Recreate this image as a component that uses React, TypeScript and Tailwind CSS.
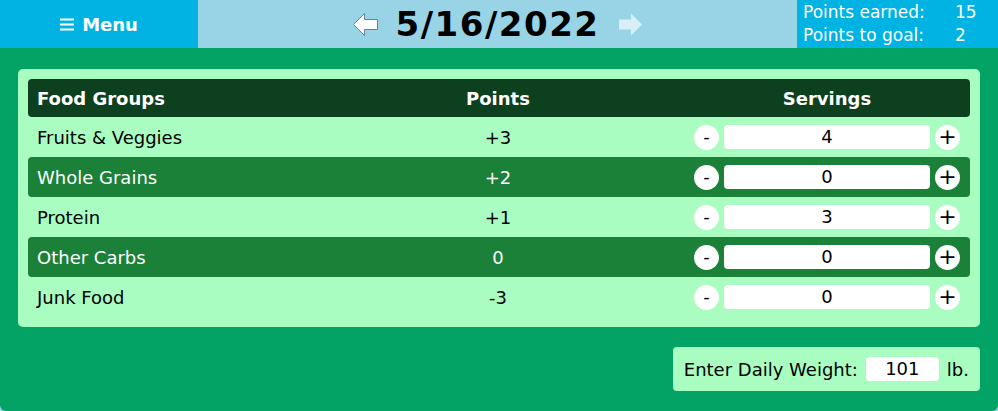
const rows = [
  { name: "Fruits & Veggies", points: "+3", servings: 4 },
  { name: "Whole Grains", points: "+2", servings: 0 },
  { name: "Protein", points: "+1", servings: 3 },
  { name: "Other Carbs", points: "0", servings: 0 },
  { name: "Junk Food", points: "-3", servings: 0 },
]

function ArrowLeft() {
  return (
    <svg width="27" height="25" viewBox="0 0 27 25">
      <path d="M1.5 12.5 L12.5 1.5 L12.5 7.5 L25.5 7.5 L25.5 17.5 L12.5 17.5 L12.5 23.5 Z" fill="#ffffff" stroke="#6b7f95" strokeWidth="1" />
    </svg>
  )
}

function ArrowRight() {
  return (
    <svg width="25" height="25" viewBox="0 0 25 25">
      <path d="M24 12.5 L13 1.5 L13 7.5 L1 7.5 L1 17.5 L13 17.5 L13 23.5 Z" fill="#d8eff6" />
    </svg>
  )
}

function MenuIcon() {
  return (
    <svg width="14" height="13" viewBox="0 0 14 13">
      <rect x="0" y="0.5" width="14" height="2" fill="#ffffff" />
      <rect x="0" y="5.5" width="14" height="2" fill="#ffffff" />
      <rect x="0" y="10.5" width="14" height="2" fill="#ffffff" />
    </svg>
  )
}

export default function App() {
  return (
    <div className="w-[998px] h-[411px] flex flex-col bg-[#99d4e6] text-black" style={{ fontFamily: '"DejaVu Sans", Verdana, sans-serif' }}>
      {/* Header */}
      <header className="h-12 flex">
        <div className="w-[198px] bg-[#00b3e3] flex items-center justify-center text-white font-bold text-[18px] gap-[8px]">
          <MenuIcon />
          <span>Menu</span>
        </div>
        <div className="flex-1 bg-[#99d4e6] flex items-center justify-center">
          <ArrowLeft />
          <span className="font-bold text-[34px] tracking-[1.5px] leading-none ml-[17px] mr-[19px]">5/16/2022</span>
          <ArrowRight />
        </div>
        <div className="w-[201px] bg-[#00b3e3] text-white text-[17px] pl-[6px] pt-[1px] leading-[23px]">
          <div className="flex"><span className="w-[152px]">Points earned:</span><span>15</span></div>
          <div className="flex"><span className="w-[152px]">Points to goal:</span><span>2</span></div>
        </div>
      </header>

      {/* Main */}
      <main className="flex-1 bg-[#02a364] rounded-b-md px-[18px] pt-[21px] flex flex-col">
        <div className="bg-[#a9fdc0] rounded-[5px] p-[10px]">
          <div className="h-[38px] bg-[#0c401e] rounded-[4px] flex items-center text-white font-bold text-[18px] pl-[9px] pr-[10px]">
            <div className="w-[381px]">Food Groups</div>
            <div className="w-[160px] text-center">Points</div>
            <div className="ml-auto w-[266px] text-center">Servings</div>
          </div>
          {rows.map((r, i) => {
            const dark = i % 2 === 1
            return (
              <div
                key={r.name}
                className={`h-10 flex items-center text-[18px] pl-[9px] pr-[10px] rounded-[4px] ${dark ? "bg-[#1b8038] text-white" : "text-black"}`}
              >
                <div className="w-[381px]">{r.name}</div>
                <div className="w-[160px] text-center">{r.points}</div>
                <div className="ml-auto w-[266px] flex items-center gap-[5px]">
                  <button className="w-[25px] h-[25px] rounded-full bg-white text-black text-[18px] leading-none flex items-center justify-center">-</button>
                  <div className="w-[206px] h-6 bg-white rounded-[4px] text-black text-center leading-6">{r.servings}</div>
                  <button className="w-[25px] h-[25px] rounded-full bg-white text-black text-[22px] leading-none flex items-center justify-center">+</button>
                </div>
              </div>
            )
          })}
        </div>

        <div className="flex justify-end mt-5">
          <div className="h-11 bg-[#a9fdc0] rounded-[4px] flex items-center pl-[11px] pr-[11px] gap-[8px] text-[18px]">
            <span>Enter Daily Weight:</span>
            <div className="w-[73px] h-6 bg-white rounded-[4px] text-center leading-6">101</div>
            <span>lb.</span>
          </div>
        </div>
      </main>
    </div>
  )
}
